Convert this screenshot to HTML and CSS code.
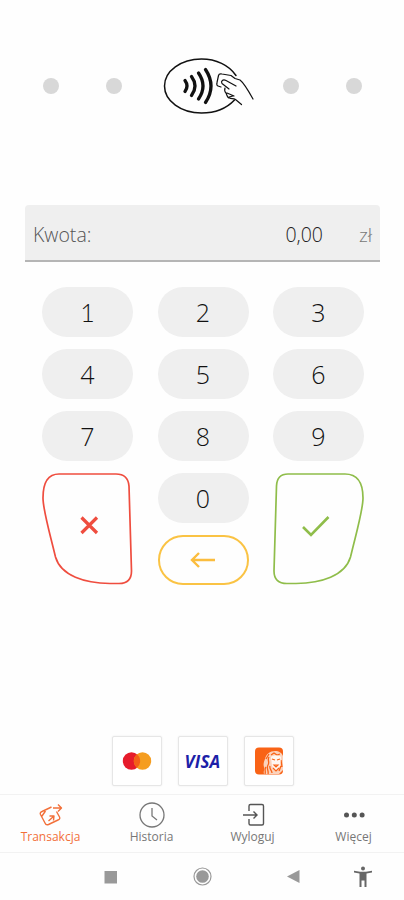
FILE: index.html
```html
<!DOCTYPE html>
<html lang="pl">
<head>
    <meta charset="utf-8" />
    <meta name="viewport" content="width=device-width, initial-scale=1" />
    <title>Transakcja</title>
    <link rel="stylesheet" href="styles.css">
</head>
<body>
    <div class="app">
        <div class="reader">
            <span class="dot"></span>
            <span class="dot"></span>
            <svg class="contactless" width="92" height="58" viewBox="0 0 92 58" fill="none" stroke="#111" stroke-linecap="round" stroke-linejoin="round">
                <path d="M73 18.500C66 8 53 2 38.500 2C18 2 1.500 14 1.500 29S18 56 38.500 56C52 56 64 51 71.500 43" stroke-width="1.500" />
                <path d="M22 23.500q4 5.500 0 11M28.500 19.500q7 9.500 0 19M35.500 16q9 13 0 26M42.500 12.500q11 16.500 0 33" stroke-width="3.300" />
                <path d="M58 30l-3-1c-1.500-.5-1.500-1.500-1-3.500l1.500-7c.5-2 1.500-2 3.500-1.500l9 1.500 4 3 5 1.500c4 3 8 10 13 19" stroke-width="1.200" />
                <path d="M73 29l-10-5.500c-3-1.500-5.500.5-4 3l7 5.500M62 31c-1 3 0 4 1 5 1 2 1 5 3.500 5 2 1 4 0 6 1.500l6 5M64 36l7 3M66 40l4-1" stroke-width="1.200" />
            </svg>
            <span class="dot"></span>
            <span class="dot"></span>
        </div>

        <div class="amount">
            <span class="amount-label">Kwota:</span>
            <span class="amount-value">0,00</span>
            <span class="amount-currency">zł</span>
        </div>

        <div class="keypad">
            <button class="key key-one">1</button>
            <button class="key">2</button>
            <button class="key">3</button>
            <button class="key">4</button>
            <button class="key">5</button>
            <button class="key">6</button>
            <button class="key">7</button>
            <button class="key">8</button>
            <button class="key">9</button>
            <button class="action cancel" aria-label="Anuluj">
                <svg width="91" height="112" viewBox="0 0 91 112" fill="none" stroke="#ef4d3f" stroke-width="1.700">
                    <path d="M17 1H74Q86 1 87 13L89.500 98Q89.500 110.500 77 110.500H68C43 110 19 103 13.500 84C7 57 1 37 1 25Q1 1 17 1Z" />
                    <path d="M39.500 44.500l15.500 15.500M55 44.500l-15.500 15.500" stroke-width="3.200" />
                </svg>
            </button>
            <button class="key">0</button>
            <button class="action confirm" aria-label="Zatwierdź">
                <svg width="91" height="112" viewBox="0 0 91 112" fill="none" stroke="#8fbd4a" stroke-width="1.700">
                    <path d="M15 1H72Q90 1 90 25C90 37 84 57 77.500 84C72 103 48 110 23 110.500H14Q1 110.500 1 98L3.500 13Q4 1 15 1Z" />
                    <path d="M30 54l8 8L55.500 44" stroke-width="2.600" />
                </svg>
            </button>
            <button class="key back" aria-label="Cofnij">
                <svg width="26" height="18" viewBox="0 0 26 18" fill="none" stroke="#fbbd3e" stroke-width="2.400">
                    <path d="M25 9H2M9 2L2 9l7 7" />
                </svg>
            </button>
        </div>

        <div class="cards">
            <div class="card">
                <svg width="30" height="18" viewBox="0 0 30 18">
                    <circle cx="9.500" cy="9" r="8.700" fill="#e61b2b" />
                    <circle cx="20.500" cy="9" r="8.700" fill="#f59d20" />
                    <path d="M15 2.300a8.700 8.700 0 0 1 0 13.400a8.700 8.700 0 0 1 0-13.400z" fill="#f35f16" />
                </svg>
            </div>
            <div class="card"><span class="visa">VISA</span></div>
            <div class="card">
                <svg width="30" height="28" viewBox="0 0 30 28" fill="none">
                    <rect x="1" y="0.500" width="28" height="27" rx="4" fill="#f96316" />
                    <path d="M10 27c-1-3 1-4 0-7-1-3 0-5 1-8 1-5 5-8 10-8 4 0 7 2 8 5v14l-4 4z" fill="#fbd3bd" />
                    <path d="M11 27c1-3-1-5 1-7M14 27c1-3-2-6 0-9s-1-5 1-8M18 26c0-3-3-4-2-7M12 12l3-5M17 8l3-2 3 2 3-1M25 24l2-5M28 20l-1-7" stroke="#f96316" stroke-width="1.300" />
                    <path d="M17 10c2-2 8-2 10 0l-1 9-4 5-4-5z" fill="#fff7f1" />
                    <path d="M18 12l3 1M26 12l-3 1M20 18h4l-2 2zM19 21l3 3 3-3" stroke="#f96316" stroke-width="1.200" />
                </svg>
            </div>
        </div>

        <div class="tabs">
            <a class="tab active">
                <svg width="28" height="26" viewBox="0 0 28 26" fill="none" stroke="currentColor" stroke-width="1.400" stroke-linejoin="round">
                    <path d="M14.500 5L5 9.500q-2.500 1-1.500 3L8 21q1 2.500 3.500 1.500L21 18q2.500-1 1.500-3L19.500 9.500M5 14l3.500-5" />
                    <path d="M16 6h8M21 2.500L24.500 6 21 9.500M11.500 19l5-4.500M12.500 14h4.500l-.5 4.500" />
                </svg>
                <span>Transakcja</span>
            </a>
            <a class="tab">
                <svg width="26" height="26" viewBox="0 0 26 26" fill="none" stroke="currentColor" stroke-width="1.300">
                    <circle cx="13" cy="13" r="12" />
                    <path d="M13 6v8l5 4" />
                </svg>
                <span>Historia</span>
            </a>
            <a class="tab">
                <svg width="24" height="26" viewBox="0 0 24 26" fill="none" stroke="#555" stroke-width="1.400">
                    <path d="M8 9V4Q8 2.500 9.500 2.500H21q1.500 0 1.500 1.500v17.500q0 1.500-1.500 1.500H9.500Q8 23 8 21.500V17" />
                    <path d="M2 13h14M12.500 9.500l3.500 3.500-3.500 3.500" />
                </svg>
                <span>Wyloguj</span>
            </a>
            <a class="tab">
                <svg width="24" height="26" viewBox="0 0 24 26" fill="#555">
                    <circle cx="4.500" cy="13" r="2.500" />
                    <circle cx="12.300" cy="13" r="2.500" />
                    <circle cx="20.100" cy="13" r="2.500" />
                </svg>
                <span>Więcej</span>
            </a>
        </div>

        <div class="system-bar">
            <svg width="20" height="20" viewBox="0 0 20 20"><rect x="3.500" y="4" width="12.500" height="12.500" fill="#999" /></svg>
            <svg width="20" height="20" viewBox="0 0 20 20">
                <circle cx="10.500" cy="9.500" r="8.500" fill="none" stroke="#999" stroke-width="1.200" />
                <circle cx="10.500" cy="9.500" r="6.300" fill="#999" />
            </svg>
            <svg width="20" height="20" viewBox="0 0 20 20"><path d="M4 9.500L16.500 3v13z" fill="#999" /></svg>
            <svg class="accessibility" width="20" height="22" viewBox="0 0 20 22" fill="#666">
                <circle cx="10" cy="2.500" r="2" />
                <path d="M1 4.800l6 1h6l6-1v1.800l-5.500 1V21h-2v-6.500h-3V21h-2V7.600L1 6.600z" />
            </svg>
        </div>
    </div>
</body>
</html>
```
FILE: styles.css
```css
* { box-sizing: border-box; margin: 0; padding: 0; }
body {
    font-family: 'Open Sans', 'Noto Sans', sans-serif;
    background: #fefefe;
    color: #333;
}
.app {
    height: 900px;
    display: flex;
    flex-direction: column;
    overflow: hidden;
}
.reader {
    height: 58px;
    margin: 57px 42px 0 43px;
    display: flex;
    align-items: center;
}
.dot {
    width: 16px;
    height: 16px;
    border-radius: 50%;
    background: #d8d8d8;
}
.dot + .dot {
    margin-left: 47px;
}
.contactless {
    margin: 0 28px 0 41px;
}
.amount {
    height: 57px;
    margin: 90px 24px 0 25px;
    padding: 4px 8px 0 8px;
    display: flex;
    align-items: center;
    background: #efefef;
    border-bottom: 2px solid #b5b5b5;
    border-radius: 4px 4px 0 0;
    font-size: 19.500px;
    font-weight: 300;
}
.amount-label {
    flex: 1;
    color: #555;
}
.amount-value {
    color: #222;
}
.amount-currency {
    width: 49px;
    text-align: right;
    font-size: 19px;
    color: #777;
}
.keypad {
    margin: 25px 40px 0 42px;
    display: grid;
    grid-template-columns: repeat(3, 91px);
    grid-auto-rows: 50px;
    column-gap: 24.500px;
    row-gap: 12px;
}
.key {
    display: flex;
    align-items: center;
    justify-content: center;
    border: none;
    border-radius: 25px;
    background: #efefef;
    font-family: inherit;
    font-size: 25px;
    font-weight: 300;
    color: #111;
}
.key-one {
    font-family: Lato, sans-serif;
}
.action {
    grid-row: span 2;
    height: 112px;
    border: none;
    background: none;
}
.action svg {
    display: block;
}
.back {
    grid-column: 2;
    background: none;
    border: 2px solid #fac344;
}
.cards {
    margin-top: 151px;
    padding-left: 1px;
    display: flex;
    justify-content: center;
    gap: 16px;
}
.card {
    width: 50px;
    height: 50px;
    display: flex;
    align-items: center;
    justify-content: center;
    background: #fff;
    border: 1px solid #e6e6e6;
    border-radius: 2px;
    box-shadow: 0 0 2px rgba(0,0,0,0.08);
}
.visa {
    font-size: 17px;
    font-weight: 700;
    font-style: italic;
    letter-spacing: 0.200px;
    color: #1d1fa8;
}
.tabs {
    height: 59px;
    margin-top: 8px;
    padding-top: 7px;
    display: grid;
    grid-template-columns: repeat(4, 1fr);
    border-top: 1px solid #f2f2f2;
    border-bottom: 1px solid #f2f2f2;
}
.tab {
    display: flex;
    flex-direction: column;
    align-items: center;
    font-size: 12px;
    line-height: 17px;
    color: #777;
}
.active {
    color: #f2703a;
}
.system-bar {
    height: 47px;
    padding-left: 101px;
    display: flex;
    align-items: center;
    gap: 71px;
}
.accessibility {
    margin-left: -21px;
}
```
